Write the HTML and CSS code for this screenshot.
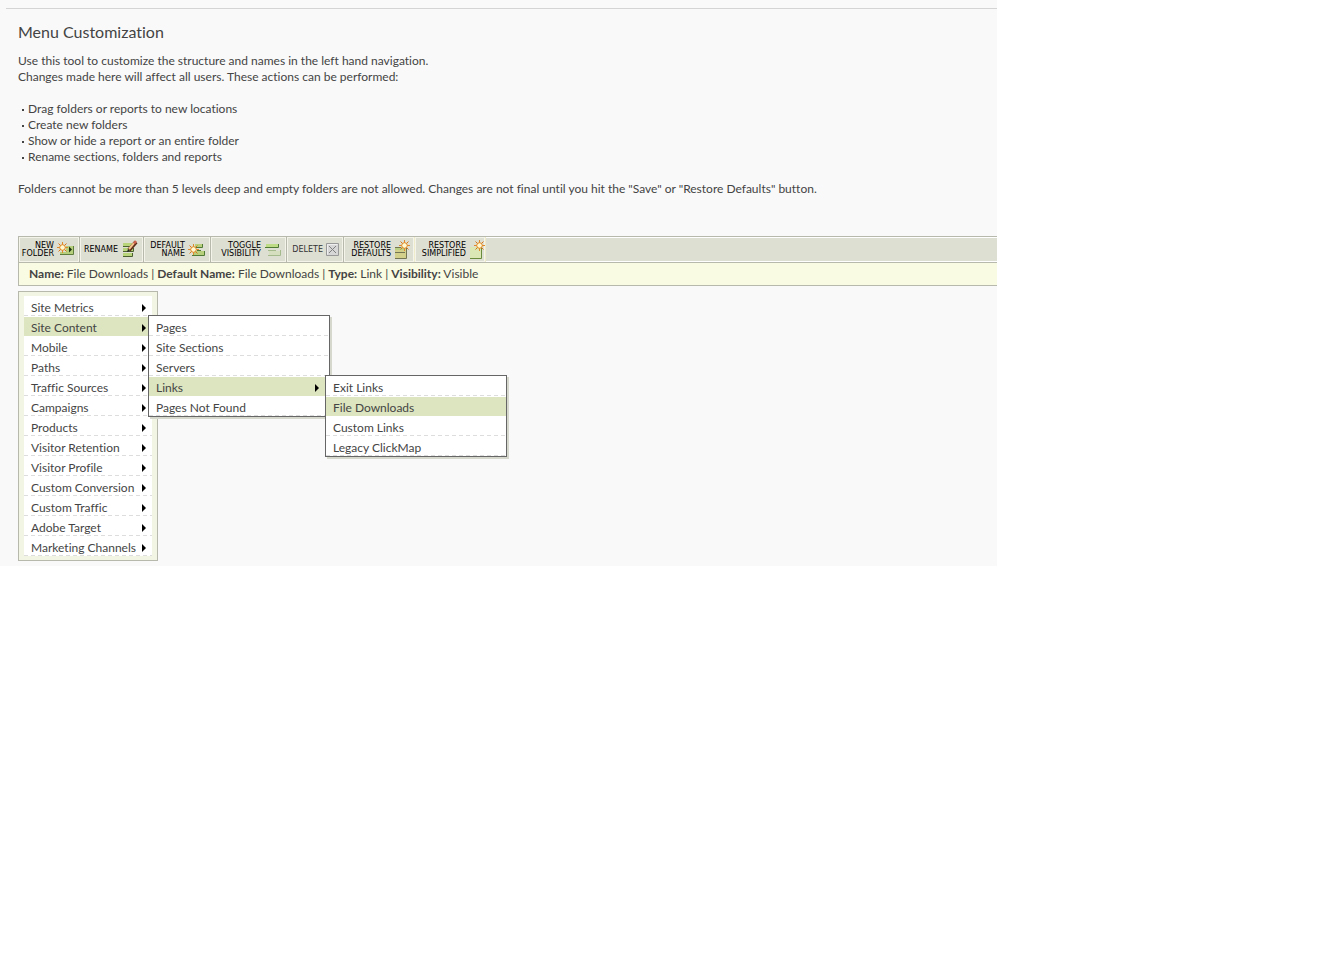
FILE: index.html
```html
<!DOCTYPE html>
<html lang="en">

<head>
    <meta charset="UTF-8">
    <meta name="viewport" content="width=device-width, initial-scale=1.0">
    <title>Menu Customization</title>
    <link rel="stylesheet" href="styles.css">
</head>

<body>
    <!-- shared icon shapes -->
    <svg class="defs" width="0" height="0">
        <symbol id="spark" viewBox="0 0 11 11">
            <path d="M5.500 0v11M0 5.500h11" stroke="#e0892c" fill="none"/>
            <path d="M1.500 1.500l8 8M9.500 1.500l-8 8" stroke="#dd7414" fill="none"/>
            <circle cx="5.500" cy="5.500" r="2.800" fill="#fff8d0" stroke="#e08420"/>
        </symbol>
    </svg>

    <div class="page">
        <div class="content">
            <h1>Menu Customization</h1>
            <p>Use this tool to customize the structure and names in the left hand navigation.<br>
                Changes made here will affect all users. These actions can be performed:</p>
            <ul class="actions">
                <li>Drag folders or reports to new locations</li>
                <li>Create new folders</li>
                <li>Show or hide a report or an entire folder</li>
                <li>Rename sections, folders and reports</li>
            </ul>
            <p>Folders cannot be more than 5 levels deep and empty folders are not allowed. Changes are not final until you hit the "Save" or "Restore Defaults" button.</p>

            <div class="toolbar">
                <button type="button" class="tool tool-new">
                    <span>NEW<br>FOLDER</span>
                    <svg width="18" height="20" viewBox="0 0 18 20">
                        <path d="M9 6h8v8H3v-2h6z" fill="#b5cf7d"/>
                        <path d="M3 14.500h13.500V6" fill="none" stroke="#5f7d3c"/>
                        <path d="M12 6.500l3 3-3 3z" fill="#1d3312"/>
                        <use href="#spark" x="0" y="2" width="11" height="11"/>
                    </svg>
                </button>
                <button type="button" class="tool tool-rename">
                    <span>RENAME</span>
                    <svg width="18" height="20" viewBox="0 0 18 20">
                        <path d="M2 3h9v3H2zM2 8h10v3H2zM2 13h9v3H2z" fill="#b9d57c"/>
                        <path d="M2 6.500h8M2 11.500h10.500V8M2 16.500h9.500V13" fill="none" stroke="#4b5f30"/>
                        <path d="M8 10l7-8" stroke="#5c2a18" stroke-width="4"/>
                        <path d="M8 9l5-6" stroke="#f4c48c" stroke-width="2"/>
                        <path d="M13 3.500l2-2.500" stroke="#cf6550" stroke-width="2.500"/>
                        <path d="M6 12l1-3 2 2z" fill="#222"/>
                    </svg>
                </button>
                <button type="button" class="tool tool-default">
                    <span>DEFAULT<br>NAME</span>
                    <svg width="18" height="20" viewBox="0 0 18 20">
                        <path d="M7 4h7v3H7zM5 11h12v4H5z" fill="#b5cf7d"/>
                        <path d="M7 7.500h7.500V4M9 10.500h4M4 15.500h12.500V11" fill="none" stroke="#4f7a35"/>
                        <use href="#spark" x="0" y="4" width="11" height="11"/>
                    </svg>
                </button>
                <button type="button" class="tool tool-toggle">
                    <span>TOGGLE<br>VISIBILITY</span>
                    <svg width="18" height="20" viewBox="0 0 18 20">
                        <path d="M2 4h12v4H2z" fill="#bedb86"/>
                        <path d="M1 7.500h13.500V4" fill="none" stroke="#4f7a35"/>
                        <path d="M5 11h11v4H5z" fill="#d5dfbf"/>
                        <path d="M4 10.500h8M4 15.500h12.500V10" fill="none" stroke="#a6bb8d"/>
                    </svg>
                </button>
                <button type="button" class="tool tool-delete" disabled>
                    <span>DELETE</span>
                    <svg width="13" height="20" viewBox="0 0 13 20">
                        <path d="M.5 3.500h12v12H.5z" fill="#d6d6d6" stroke="#999"/>
                        <path d="M1.500 14.500v-10h10" fill="none" stroke="#eee"/>
                        <path d="M3 6l7 7M10 6l-7 7" stroke="#808080"/>
                    </svg>
                </button>
                <button type="button" class="tool tool-restore">
                    <span>RESTORE<br>DEFAULTS</span>
                    <svg width="16" height="20" viewBox="0 0 16 20">
                        <path d="M1 7h11v11H1z" fill="#d3d08c"/>
                        <path d="M1 7h10v3H1z" fill="#b9d083"/>
                        <path d="M1 7.500h6M1 12.500h10M1 18.500h11.500V8" fill="none" stroke="#747653"/>
                        <use href="#spark" x="5" y="0" width="11" height="11"/>
                    </svg>
                </button>
                <button type="button" class="tool tool-simple">
                    <span>RESTORE<br>SIMPLIFIED</span>
                    <svg width="16" height="20" viewBox="0 0 16 20">
                        <path d="M1 7h11v11H1z" fill="#dbe7b4"/>
                        <path d="M1 18.500h11.500V8" fill="none" stroke="#6a8a3c"/>
                        <use href="#spark" x="5" y="0" width="11" height="11"/>
                    </svg>
                </button>
            </div>

            <div class="info">
                <b>Name:</b> File Downloads | <b>Default Name:</b> File Downloads | <b>Type:</b> Link | <b>Visibility:</b> Visible
            </div>

            <ul class="menu">
                <li><a class="folder" href="#">Site Metrics</a></li>
                <li>
                    <a class="folder selected" href="#">Site Content</a>
                    <ul class="submenu">
                        <li><a href="#">Pages</a></li>
                        <li><a href="#">Site Sections</a></li>
                        <li><a href="#">Servers</a></li>
                        <li>
                            <a class="folder selected" href="#">Links</a>
                            <ul class="submenu">
                                <li><a href="#">Exit Links</a></li>
                                <li><a class="selected" href="#">File Downloads</a></li>
                                <li><a href="#">Custom Links</a></li>
                                <li><a href="#">Legacy ClickMap</a></li>
                            </ul>
                        </li>
                        <li><a href="#">Pages Not Found</a></li>
                    </ul>
                </li>
                <li><a class="folder" href="#">Mobile</a></li>
                <li><a class="folder" href="#">Paths</a></li>
                <li><a class="folder" href="#">Traffic Sources</a></li>
                <li><a class="folder" href="#">Campaigns</a></li>
                <li><a class="folder" href="#">Products</a></li>
                <li><a class="folder" href="#">Visitor Retention</a></li>
                <li><a class="folder" href="#">Visitor Profile</a></li>
                <li><a class="folder" href="#">Custom Conversion</a></li>
                <li><a class="folder" href="#">Custom Traffic</a></li>
                <li><a class="folder" href="#">Adobe Target</a></li>
                <li><a class="folder" href="#">Marketing Channels</a></li>
            </ul>
        </div>
    </div>
</body>

</html>
```
FILE: styles.css
```css
* {
    margin: 0;
    padding: 0;
    box-sizing: border-box;
}

body {
    background: #fff;
    color: #444;
    font-family: Lato, "Open Sans", sans-serif;
    font-size: 12px;
    font-variant-ligatures: none;
    line-height: 16px;
}

ul {
    list-style: none;
}

.defs {
    display: block;
}

.page {
    max-width: 997px;
    padding: 8px 0 5px 6px;
    background: #f9f9f9;
}

.content {
    border-top: 1px solid #d4d4d4;
    padding: 12px 0 0 12px;
}

h1 {
    margin-bottom: 10px;
    font-size: 16px;
    font-weight: normal;
    line-height: 22px;
}

.actions {
    margin: 16px 0;
}

.actions li {
    padding-left: 3px;
}

.actions li::before {
    content: "";
    display: inline-block;
    width: 2px;
    height: 2px;
    margin: 0 4px 2px 1px;
    background: #444;
}

/* toolbar */
.toolbar {
    display: flex;
    margin-top: 39px;
    height: 26px;
    border: 1px solid #b8b9ad;
    border-width: 1px 0 0 1px;
    background: #dedfd3;
    box-shadow: inset 0 1px #fff, inset 0 -1px #fff;
}

.tool {
    display: flex;
    align-items: center;
    justify-content: flex-end;
    gap: 3px;
    padding-right: 4px;
    border: 0;
    border-right: 1px solid #b8b9ad;
    background: none;
    box-shadow: inset 0 0 0 1px #f4f4ea;
    color: #000;
    font: 8px/8px "DejaVu Sans", sans-serif;
    text-align: right;
}

.tool:disabled {
    color: #333;
}

.tool-new {
    width: 61px;
}

.tool-rename {
    width: 64px;
}

.tool-default {
    width: 67px;
}

.tool-toggle {
    width: 76px;
}

.tool-delete {
    width: 57px;
}

.tool-restore,
.tool-simple {
    width: 71px;
    border-color: #eeeccb;
}

.tool-simple {
    padding-right: 0;
}

.info {
    height: 24px;
    padding-left: 10px;
    border: 1px solid #b8b9ad;
    border-right: 0;
    background: #f9fbe3;
    line-height: 22px;
}

/* folder menus */
.menu {
    width: 140px;
    margin-top: 5px;
    padding: 4px 5px;
    border: 1px solid #b8b9ad;
    background: #f2f4e4;
}

.menu li {
    position: relative;
    height: 20px;
}

.menu a {
    display: flex;
    justify-content: space-between;
    height: 20px;
    padding: 0 6px 0 7px;
    background: repeating-linear-gradient(90deg, #ddd 0 4px, #fff 4px 7px) 0 100% / 100% 1px no-repeat #fff;
    color: #444;
    line-height: 23px;
    text-decoration: none;
    white-space: nowrap;
}

.menu .selected {
    border-top: 1px solid #fff;
    background: #dce5bf;
    line-height: 21px;
}

.folder::after {
    content: "";
    align-self: flex-end;
    margin-bottom: 4px;
    border: solid transparent;
    border-width: 4px 0 4px 4px;
    border-left-color: #000;
}

.submenu {
    position: absolute;
    z-index: 1;
    top: -1px;
    left: 124px;
    width: 182px;
    border: 1px solid #666;
    box-shadow: 2px 2px #d6d8ce;
}

.submenu .submenu {
    left: 176px;
}

.submenu .folder {
    padding-right: 10px;
}
```
